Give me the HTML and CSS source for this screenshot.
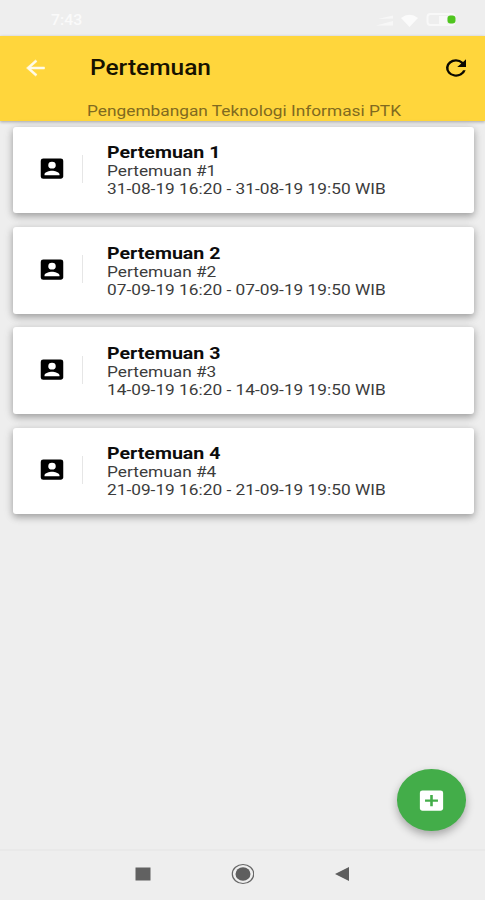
FILE: index.html
```html
<!DOCTYPE html>
<html lang="id">
<head>
<meta charset="utf-8">
<title>Pertemuan</title>
<link rel="stylesheet" href="styles.css">
</head>
<body>
<div class="screen">
  <div class="status">
    <span class="clock">7:43</span>
    <svg class="status-icons" width="86" height="16" viewBox="0 0 86 16">
      <path d="M0 13.500 17 9v4.500zM2 7l15-3.500v3z" fill="#f7f7f7"/>
      <path d="M25 6q8.500-6.500 17 0l-8.500 9z" fill="#fbfbfb"/>
      <rect x="51.500" y="2" width="27" height="11" rx="3" fill="none" stroke="#f8f8f8" stroke-width="2"/>
      <path d="M63 4h8v8h-8z" fill="#f8f8f8"/>
      <rect x="71.500" y="3.500" width="8" height="8" rx="3" fill="#4fc51e"/>
    </svg>
  </div>
  <header class="appbar">
    <div class="toolbar">
      <svg class="back" width="27" height="24" viewBox="0 0 24 24" preserveAspectRatio="none"><path d="M20 11H7.830l5.590-5.590L12 4l-8 8 8 8 1.410-1.410L7.830 13H20z" fill="#fffbe9" stroke="#fffbe9" stroke-width=".5"/></svg>
      <h1 class="title">Pertemuan</h1>
      <svg class="refresh" width="30" height="26" viewBox="0 0 24 24" preserveAspectRatio="none"><path d="M17.650 6.350A7.960 7.960 0 0 0 12 4a8 8 0 1 0 7.730 10h-2.080A6 6 0 1 1 12 6c1.660 0 3.140.690 4.220 1.780L13 11h7V4z" fill="#0b0900"/></svg>
    </div>
    <p class="subtitle">Pengembangan Teknologi Informasi PTK</p>
  </header>
  <main class="list">
    <article class="card">
      <div class="lead"><svg width="30" height="27" viewBox="0 0 24 24" preserveAspectRatio="none"><use href="#account"/></svg></div>
      <div class="text"><h2>Pertemuan 1</h2><p>Pertemuan #1</p><p class="time">31-08-19 16:20 - 31-08-19 19:50 WIB</p></div>
    </article>
    <article class="card">
      <div class="lead"><svg width="30" height="27" viewBox="0 0 24 24" preserveAspectRatio="none"><use href="#account"/></svg></div>
      <div class="text"><h2>Pertemuan 2</h2><p>Pertemuan #2</p><p class="time">07-09-19 16:20 - 07-09-19 19:50 WIB</p></div>
    </article>
    <article class="card">
      <div class="lead"><svg width="30" height="27" viewBox="0 0 24 24" preserveAspectRatio="none"><use href="#account"/></svg></div>
      <div class="text"><h2>Pertemuan 3</h2><p>Pertemuan #3</p><p class="time">14-09-19 16:20 - 14-09-19 19:50 WIB</p></div>
    </article>
    <article class="card">
      <div class="lead"><svg width="30" height="27" viewBox="0 0 24 24" preserveAspectRatio="none"><use href="#account"/></svg></div>
      <div class="text"><h2>Pertemuan 4</h2><p>Pertemuan #4</p><p class="time">21-09-19 16:20 - 21-09-19 19:50 WIB</p></div>
    </article>
  </main>
  <button class="fab" aria-label="Tambah">
    <svg width="31" height="27" viewBox="0 0 24 24" preserveAspectRatio="none"><path d="M19 3H5a2 2 0 0 0-2 2v14c0 1.100.900 2 2 2h14c1.100 0 2-.900 2-2V5a2 2 0 0 0-2-2zm-2 10h-4v4h-2v-4H7v-2h4V7h2v4h4z" fill="#fff"/></svg>
  </button>
  <nav class="navbar">
    <svg width="16" height="14" viewBox="0 0 16 14"><path d="M.5.500h15v13H.5z" fill="#616161"/></svg>
    <svg width="24" height="22" viewBox="0 0 24 22"><ellipse cx="13" cy="11" rx="10.700" ry="9.500" fill="none" stroke="#666" stroke-width="1.200"/><ellipse cx="13" cy="11" rx="7.500" ry="6.700" fill="#5e5e5e"/></svg>
    <svg width="16" height="16" viewBox="0 0 16 16"><path d="M1 8 15 1v14z" fill="#5e5e5e"/></svg>
  </nav>
</div>
<svg width="0" height="0" class="defs"><symbol id="account" viewBox="0 0 24 24" preserveAspectRatio="none"><path d="M3 5v14a2 2 0 0 0 2 2h14c1.100 0 2-.900 2-2V5a2 2 0 0 0-2-2H5a2 2 0 0 0-2 2zm12 4a3 3 0 1 1-6 0 3 3 0 0 1 6 0zm-9 8c0-2 4-3.100 6-3.100s6 1.100 6 3.100v1H6z"/></symbol></svg>
</body>
</html>
```
FILE: styles.css
```css
* { box-sizing: border-box; margin: 0; }
body { background: #eee; font-family: Roboto, "Liberation Sans", sans-serif; overflow: hidden; }
.defs { position: absolute; }
.screen { position: relative; display: flex; flex-direction: column; width: 485px; height: 900px; }
.status { display: flex; justify-content: space-between; align-items: center; height: 36px; padding: 4px 26px 0 51px; }
.clock { color: #fafafa; font-size: 14px; font-weight: 500; transform: scaleX(1.13); transform-origin: left; }
.status-icons { margin-right: -3px; }
.appbar { display: flex; flex-direction: column; height: 84.500px; background: #ffd63c; box-shadow: 0 1px 3px rgba(0,0,0,.3); overflow: hidden; }
.toolbar { display: flex; align-items: center; height: 63px; padding: 0 14px 0 22px; }
.title { flex: 1; margin-left: 41px; padding-top: 1px; font-size: 21.500px; line-height: 26px; font-weight: 500; color: #171200; transform: scaleX(1.14); transform-origin: left; white-space: nowrap; }
.subtitle { margin: 3px 0 0 87px; font-size: 15px; line-height: 18px; color: #806a20; transform: scaleX(1.153); transform-origin: left; white-space: nowrap; }
.list { display: flex; flex-direction: column; gap: 13.700px; padding: 6px 11.500px 0 13px; }
.card { display: flex; align-items: center; height: 86.700px; background: #fff; border-radius: 3px; box-shadow: 0 3px 7px rgba(0,0,0,.28), 0 2px 12px rgba(0,0,0,.1); }
.lead { display: flex; align-items: center; width: 70px; height: 28px; padding-left: 24px; margin-bottom: 2px; border-right: 1px solid #e6e6e6; }
.text { margin-left: 24px; padding-top: 1px; transform: scaleX(1.152); transform-origin: left; white-space: nowrap; color: #3c3c3c; }
.text h2 { font-size: 17px; line-height: 20px; font-weight: 700; color: #0c0c0c; }
.text p { font-size: 15px; line-height: 18px; }
.fab { position: absolute; left: 396.500px; top: 769px; width: 69.500px; height: 62px; display: flex; align-items: center; justify-content: center; border: 0; border-radius: 50%; background: #43ad49; box-shadow: 0 4px 8px rgba(0,0,0,.3); }
.navbar { display: flex; align-items: center; justify-content: space-between; height: 51px; margin-top: auto; padding: 0 135px 3px 134.500px; border-top: 2px solid #e9e9e9; }
```
